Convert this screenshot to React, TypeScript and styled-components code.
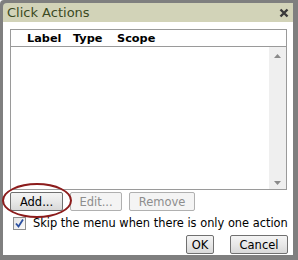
import styled, { createGlobalStyle } from "styled-components";

const GlobalStyle = createGlobalStyle`
  body {
    margin: 0;
    font-family: "DejaVu Sans", Verdana, sans-serif;
  }
`;

const columns = ["Label", "Type", "Scope"];

const App = () => {
  return (
    <>
      <GlobalStyle />
      <Window>
        <TitleBar>
          <Title>Click Actions</Title>
          <CloseIcon viewBox="0 0 10 10">
            <path d="M1.5 1.5 L8.5 8.5 M8.5 1.5 L1.5 8.5" />
          </CloseIcon>
        </TitleBar>
        <Body>
          <ListBox>
            <ListHeader>
              {columns.map((c) => (
                <HeaderCell key={c}>{c}</HeaderCell>
              ))}
            </ListHeader>
            <ListContent>
              <ListRows />
              <ScrollBar>
                <Arrow viewBox="0 0 7 4">
                  <path d="M0 4 L3.5 0 L7 4 Z" />
                </Arrow>
                <Arrow viewBox="0 0 7 4">
                  <path d="M0 0 L3.5 4 L7 0 Z" />
                </Arrow>
              </ScrollBar>
            </ListContent>
          </ListBox>
          <ButtonRow>
            <Highlight>
              <Button $width={53}>Add...</Button>
            </Highlight>
            <Button $width={52} disabled>
              Edit...
            </Button>
            <Button $width={66} disabled>
              Remove
            </Button>
          </ButtonRow>
          <CheckRow>
            <CheckBox>
              <svg viewBox="0 0 11 11" width="11" height="11">
                <path d="M2 5.5 L4.5 8.5 L9 1.5" />
              </svg>
            </CheckBox>
            <CheckLabel>Skip the menu when there is only one action</CheckLabel>
          </CheckRow>
          <FooterRow>
            <Button $width={28}>OK</Button>
            <Button $width={58}>Cancel</Button>
          </FooterRow>
        </Body>
      </Window>
    </>
  );
};

const Window = styled.div`
  width: 298px;
  height: 260px;
  box-sizing: border-box;
  border-style: solid;
  border-color: #7f7f7f;
  border-width: 3px 5px 5px 3px;
  border-top-left-radius: 4px;
  background: #7f7f7f;
  display: flex;
  flex-direction: column;
`;

const TitleBar = styled.div`
  height: 19px;
  flex: none;
  display: flex;
  align-items: center;
  justify-content: space-between;
  padding: 0 4px 0 4px;
  background: #d2d3b8;
  border-top-left-radius: 4px;
`;

const Title = styled.span`
  font-size: 13px;
  color: #3b4a23;
  line-height: 19px;
`;

const CloseIcon = styled.svg`
  width: 10px;
  height: 10px;
  stroke: #3a3a3a;
  stroke-width: 2.4;
  fill: none;
`;

const Body = styled.div`
  flex: 1;
  background: #fff;
  display: flex;
  flex-direction: column;
  padding: 7px 6px 0 7px;
`;

const ListBox = styled.div`
  height: 161px;
  box-sizing: border-box;
  border: 1px solid #9a9a9a;
  display: flex;
  flex-direction: column;
`;

const ListHeader = styled.div`
  height: 16px;
  flex: none;
  display: grid;
  grid-template-columns: 46px 44px 1fr;
  padding-left: 16px;
  border-bottom: 1px solid #9a9a9a;
  align-items: center;
`;

const HeaderCell = styled.span`
  font-size: 11.3px;
  font-weight: bold;
  color: #000;
`;

const ListContent = styled.div`
  flex: 1;
  display: flex;
`;

const ListRows = styled.div`
  flex: 1;
`;

const ScrollBar = styled.div`
  width: 17px;
  background: #efefef;
  display: flex;
  flex-direction: column;
  justify-content: space-between;
  align-items: center;
  padding: 7px 0 4px;
`;

const Arrow = styled.svg`
  width: 7px;
  height: 4px;
  fill: #8a8a8a;
`;

const ButtonRow = styled.div`
  display: flex;
  gap: 7px;
  margin-top: 2px;
`;

const Highlight = styled.div`
  position: relative;
  display: flex;

  &::before {
    content: "";
    position: absolute;
    left: -8px;
    top: -9px;
    width: 66px;
    height: 31px;
    border: 2px solid #8c1c1c;
    border-radius: 50%;
    pointer-events: none;
  }
`;

const Button = styled.button<{ $width: number }>`
  height: 19px;
  width: ${(p) => p.$width}px;
  padding: 0;
  font-family: "DejaVu Sans", Verdana, sans-serif;
  font-size: 11.5px;
  color: #000;
  border: 1px solid #707070;
  border-radius: 2px;
  background: linear-gradient(#f4f4f4, #e8e8e8 50%, #d8d8d8);

  &:disabled {
    color: #8d8d8d;
    border-color: #b0b0b0;
    background: #f4f4f4;
  }
`;

const CheckRow = styled.div`
  display: flex;
  align-items: center;
  gap: 7px;
  margin-top: 5px;
  padding-left: 3px;
  height: 14px;
`;

const CheckBox = styled.span`
  width: 13px;
  height: 13px;
  box-sizing: border-box;
  border: 1px solid #8e8f8f;
  background: linear-gradient(135deg, #e4e4e4, #fafafa);
  display: flex;
  align-items: center;
  justify-content: center;

  svg {
    fill: none;
    stroke: #2a4fa0;
    stroke-width: 1.8;
  }
`;

const CheckLabel = styled.span`
  font-size: 11.4px;
  color: #000;
  white-space: nowrap;
`;

const FooterRow = styled.div`
  display: flex;
  justify-content: flex-end;
  gap: 16px;
  margin-top: 5px;
  margin-right: -1px;
`;

export default App;
